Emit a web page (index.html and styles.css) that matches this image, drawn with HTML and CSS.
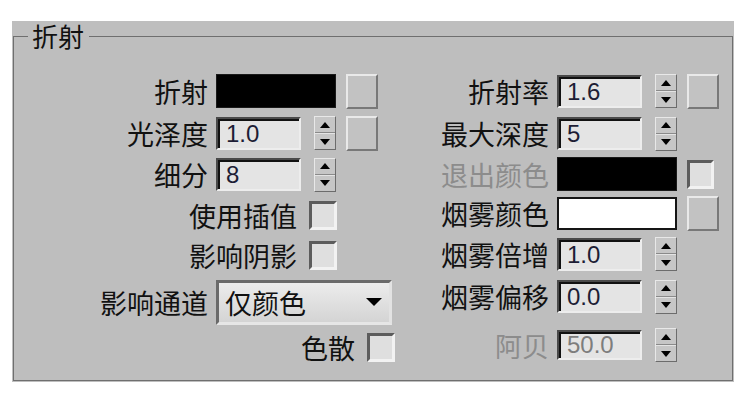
FILE: index.html
```html
<!DOCTYPE html>
<html lang="zh-CN">
<head>
<meta charset="utf-8">
<title>折射</title>
<link rel="stylesheet" href="styles.css">
</head>
<body>
<div class="panel">
  <fieldset class="group">
    <legend class="group-title">折射</legend>
    <div class="cols">
      <div class="col col-left">
        <div class="row">
          <span class="lbl">折射</span>
          <div class="swatch swatch-black"></div>
          <span class="map"></span>
        </div>
        <div class="row">
          <span class="lbl">光泽度</span>
          <div class="field">1.0</div>
          <div class="spin"><span class="up"></span><span class="down"></span></div>
          <span class="map"></span>
        </div>
        <div class="row">
          <span class="lbl">细分</span>
          <div class="field">8</div>
          <div class="spin"><span class="up"></span><span class="down"></span></div>
        </div>
        <div class="row row-check">
          <span class="lbl-inline">使用插值</span>
          <span class="check"></span>
        </div>
        <div class="row row-check">
          <span class="lbl-inline">影响阴影</span>
          <span class="check"></span>
        </div>
        <div class="row">
          <span class="lbl">影响通道</span>
          <div class="combo"><span class="combo-text">仅颜色</span><span class="combo-arrow"></span></div>
        </div>
        <div class="row row-check row-check-end">
          <span class="lbl-inline">色散</span>
          <span class="check"></span>
        </div>
      </div>
      <div class="col col-right">
        <div class="row">
          <span class="lbl">折射率</span>
          <div class="field">1.6</div>
          <div class="spin"><span class="up"></span><span class="down"></span></div>
          <span class="map"></span>
        </div>
        <div class="row">
          <span class="lbl">最大深度</span>
          <div class="field">5</div>
          <div class="spin"><span class="up"></span><span class="down"></span></div>
        </div>
        <div class="row">
          <span class="lbl disabled">退出颜色</span>
          <div class="swatch swatch-black"></div>
          <span class="check check-small"></span>
        </div>
        <div class="row">
          <span class="lbl">烟雾颜色</span>
          <div class="swatch swatch-white"></div>
          <span class="map"></span>
        </div>
        <div class="row">
          <span class="lbl">烟雾倍增</span>
          <div class="field">1.0</div>
          <div class="spin"><span class="up"></span><span class="down"></span></div>
        </div>
        <div class="row">
          <span class="lbl">烟雾偏移</span>
          <div class="field">0.0</div>
          <div class="spin"><span class="up"></span><span class="down"></span></div>
        </div>
        <div class="row">
          <span class="lbl disabled">阿贝</span>
          <div class="field field-short disabled">50.0</div>
          <div class="spin"><span class="up"></span><span class="down"></span></div>
        </div>
      </div>
    </div>
  </fieldset>
</div>
</body>
</html>
```

FILE: styles.css
```css
html, body {
  margin: 0;
  padding: 0;
  background: #ffffff;
}

body {
  font-family: "Noto Sans CJK SC", "Noto Sans", sans-serif;
  color: #111111;
}

.panel {
  margin: 21px 0 0 12px;
  width: 720px;
  padding: 0 1px 1px 1px;
  background: #bebebe;
}

.group {
  margin: 0;
  min-width: 0;
  padding: 19px 14px 9px 14px;
  border: 1px solid #6f6f6f;
}

.group-title {
  padding: 0 5px 0 4px;
  font-size: 26px;
  line-height: 30px;
  height: 30px;
}

.cols {
  display: flex;
  gap: 4px;
}

.col {
  display: grid;
}

.col-left {
  width: 368px;
  grid-template-rows: 42px 42px 41px 40px 40px 54px 36px;
}

.col-right {
  width: 318px;
  grid-template-rows: 42px 43px 38px 41px 40px 45px 52px;
}

.row {
  display: flex;
  align-items: center;
}

.lbl {
  flex: none;
  text-align: right;
  font-size: 27px;
  line-height: 1;
  margin-right: 8px;
}

.col-left .lbl { width: 180px; }
.col-right .lbl { width: 149px; }

.lbl.disabled { color: #8c8c8c; }

.row-check {
  justify-content: flex-end;
  padding-right: 59px;
}

.row-check-end {
  padding-right: 1px;
}

.lbl-inline {
  font-size: 27px;
  line-height: 1;
  margin-right: 12px;
}

/* colour swatches */
.swatch {
  box-sizing: border-box;
  flex: none;
  width: 120px;
  height: 34px;
}

.swatch-black {
  background: #000000;
  border: 1px solid #1a1a1a;
}

.swatch-white {
  background: #ffffff;
  border: 2px solid #151515;
  height: 33px;
}

/* raised map button */
.map {
  box-sizing: border-box;
  flex: none;
  width: 32px;
  height: 35px;
  margin-left: 10px;
  background: #c2c2c2;
  border: 2px solid;
  border-color: #e9e9e9 #787878 #787878 #e9e9e9;
}

/* numeric field */
.field {
  box-sizing: border-box;
  flex: none;
  width: 85px;
  height: 33px;
  padding-left: 8px;
  background: #e4e4e4;
  border: 2px solid;
  border-color: #4a4a4a #ededed #ededed #4a4a4a;
  box-shadow: inset 2px 2px 0 #111111;
  font-family: "Liberation Sans", Arial, sans-serif;
  font-size: 24px;
  line-height: 29px;
  color: #1d1d35;
}

.field-short { height: 30px; line-height: 26px; }

.field.disabled { color: #7d7d7d; }

/* spinner */
.spin {
  box-sizing: border-box;
  flex: none;
  width: 22px;
  height: 34px;
  margin-left: 13px;
  display: flex;
  flex-direction: column;
  background: #c6c6c6;
  border: 1px solid;
  border-color: #e8e8e8 #6c6c6c #6c6c6c #e8e8e8;
}

.spin .up,
.spin .down {
  flex: 1;
  display: flex;
  align-items: center;
  justify-content: center;
}

.spin .up {
  border-bottom: 1px solid #8a8a8a;
}

.spin .down {
  border-top: 1px solid #e4e4e4;
}

.spin .up::before {
  content: "";
  border-left: 5px solid transparent;
  border-right: 5px solid transparent;
  border-bottom: 6px solid #000000;
}

.spin .down::before {
  content: "";
  border-left: 5px solid transparent;
  border-right: 5px solid transparent;
  border-top: 6px solid #000000;
}

/* check boxes */
.check {
  box-sizing: border-box;
  flex: none;
  width: 28px;
  height: 29px;
  background: #dfdfdf;
  border: 3px solid;
  border-color: #5c5c5c #f2f2f2 #f2f2f2 #5c5c5c;
}

.check-small {
  width: 27px;
  margin-left: 10px;
}

/* combo box */
.combo {
  box-sizing: border-box;
  flex: none;
  width: 176px;
  height: 45px;
  display: flex;
  align-items: center;
  justify-content: space-between;
  padding: 0 7px 0 6px;
  background: linear-gradient(#ececec, #d4d4d4);
  border: 3px solid;
  border-color: #6a6a6a #e2e2e2 #e6e6e6 #6a6a6a;
}

.combo-text {
  font-size: 27px;
  line-height: 1;
}

.combo-arrow {
  border-left: 8px solid transparent;
  border-right: 8px solid transparent;
  border-top: 8px solid #000000;
}
```
